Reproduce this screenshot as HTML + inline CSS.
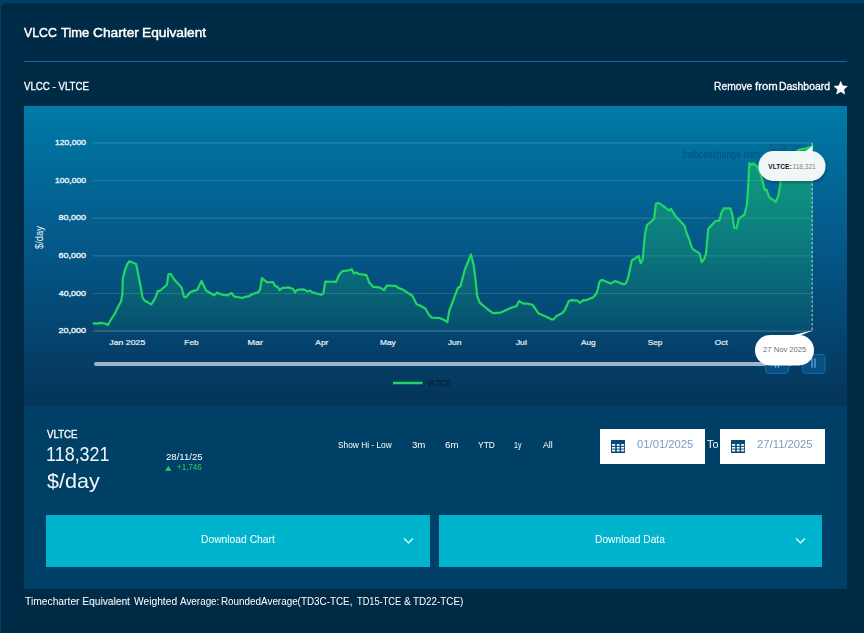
<!DOCTYPE html>
<html lang="en"><head><meta charset="utf-8"><title>VLCC Time Charter Equivalent</title>
<style>
html,body{margin:0;padding:0}
body{width:864px;height:633px;overflow:hidden;background:#003f66;position:relative;font-family:"Liberation Sans",Arial,sans-serif;color:#fff}
.card{position:absolute;left:1px;top:3px;width:870px;height:640px;background:#002b47;border-radius:5px 0 0 0}
.t{position:absolute;white-space:nowrap;line-height:1;transform-origin:0 0}
.rule{position:absolute;left:24px;top:61px;width:823px;height:1px;background:#0a6c99}
.chart{position:absolute;left:24px;top:106px;width:823px;height:300px;background:linear-gradient(#007aa6 0%,#04598a 45%,#05345a 100%)}
svg.c{position:absolute;left:0;top:0;width:864px;height:633px;overflow:visible}
svg.c text{font-family:"Liberation Sans",Arial,sans-serif}
.panel{position:absolute;left:24px;top:406px;width:823px;height:183px;background:#003f66}
.btn{position:absolute;top:515px;height:52px;background:#00b4cd}
.inp{position:absolute;top:429px;height:35px;width:105px;background:#fff}
.ico{position:absolute}
</style></head><body>
<div class="card"></div>
<div class="rule"></div>
<div class="chart"></div>
<div class="panel"></div>

<svg class="c" viewBox="0 0 864 633">
<defs>
<linearGradient id="ag" x1="0" y1="146" x2="0" y2="331" gradientUnits="userSpaceOnUse">
<stop offset="0" stop-color="#1fd15f" stop-opacity="0.50"/>
<stop offset="1" stop-color="#1fd15f" stop-opacity="0.07"/>
</linearGradient>
<filter id="sh" x="-20%" y="-30%" width="140%" height="170%"><feDropShadow dx="1" dy="1.5" stdDeviation="1.5" flood-color="#000" flood-opacity="0.35"/></filter>
</defs>
<line x1="93" x2="812.500" y1="142.9" y2="142.9" stroke="#ffffff" stroke-opacity="0.14" stroke-width="1.2"/><line x1="93" x2="812.500" y1="180.5" y2="180.5" stroke="#ffffff" stroke-opacity="0.14" stroke-width="1.2"/><line x1="93" x2="812.500" y1="218.1" y2="218.1" stroke="#ffffff" stroke-opacity="0.14" stroke-width="1.2"/><line x1="93" x2="812.500" y1="255.9" y2="255.9" stroke="#ffffff" stroke-opacity="0.14" stroke-width="1.2"/><line x1="93" x2="812.500" y1="293.5" y2="293.5" stroke="#ffffff" stroke-opacity="0.14" stroke-width="1.2"/><line x1="93" x2="812.500" y1="331.1" y2="331.1" stroke="#ffffff" stroke-opacity="0.22" stroke-width="1.2"/>
<path fill="#fff" stroke="#fff" stroke-width="0.4" stroke-linejoin="round" d="M840.70,81.30 L842.64,85.73 L847.45,86.21 L843.84,89.42 L844.87,94.14 L840.70,91.70 L836.53,94.14 L837.56,89.42 L833.95,86.21 L838.76,85.73Z"/>
<g opacity="0.68"><text x="682.81" y="157.7" font-size="10.6" fill="#03406a" textLength="77.21" lengthAdjust="spacingAndGlyphs">balticexchange.com</text></g>
<rect x="769" y="144.200" width="37" height="9" fill="#03406a" fill-opacity="0.22"/>
<path d="M771.500 147.300q2.500-1.500 4.500-.6t4 -.4M786.800 148.300l1.300-3.300 3.600 3.300z" fill="none" stroke="#2a86b0" stroke-opacity="0.45" stroke-width="0.900"/>
<path d="M93.8,323.4 L97.1,323.7 L99.5,322.9 L105.0,323.5 L107.8,325.0 L111.3,319.0 L114.5,314.2 L118.4,306.3 L121.1,301.3 L122.4,293.7 L122.8,278.7 L125.0,270.0 L127.4,263.7 L129.5,261.2 L132.6,262.6 L136.1,264.0 L137.4,270.0 L140.2,284.2 L142.6,297.6 L144.5,300.5 L151.3,304.4 L155.5,297.6 L157.9,290.8 L160.0,290.8 L166.9,284.7 L168.5,274.0 L170.8,274.0 L174.8,280.3 L181.6,287.4 L184.0,296.8 L186.0,297.2 L190.3,292.1 L197.4,289.6 L201.5,281.0 L206.0,290.5 L214.2,295.3 L217.0,292.4 L221.3,294.5 L227.6,295.3 L231.6,292.9 L234.0,296.4 L242.6,298.0 L245.0,296.8 L248.2,296.4 L252.9,294.0 L258.4,292.1 L260.0,289.7 L261.9,278.2 L267.1,282.3 L273.0,282.0 L275.0,285.8 L277.7,287.1 L279.7,290.2 L282.1,288.2 L288.4,287.4 L293.2,289.0 L295.0,292.4 L297.1,289.9 L303.4,289.3 L307.8,291.6 L310.0,290.5 L312.4,292.4 L321.1,294.8 L323.4,293.4 L325.3,281.5 L336.1,281.8 L339.2,274.7 L342.4,271.1 L348.7,270.3 L351.8,269.2 L353.9,273.6 L356.1,272.4 L358.9,274.0 L366.5,275.1 L369.2,282.6 L373.2,286.9 L379.5,287.4 L384.2,290.2 L386.6,285.5 L395.3,285.8 L399.2,288.2 L402.4,289.4 L412.3,295.7 L416.6,304.3 L420.0,305.5 L425.5,308.7 L428.7,314.5 L431.8,317.7 L439.7,318.0 L443.7,319.7 L447.3,322.1 L449.2,311.0 L453.9,298.4 L457.9,287.8 L460.3,286.6 L465.0,269.2 L471.0,254.4 L473.7,265.3 L475.3,277.9 L477.2,296.0 L479.7,302.7 L487.9,309.5 L493.0,313.1 L500.8,312.6 L510.0,308.2 L516.6,306.0 L519.0,301.1 L523.4,303.6 L527.4,303.6 L532.4,304.7 L538.7,313.6 L545.8,316.6 L551.3,319.3 L553.7,319.4 L556.1,316.3 L562.4,313.0 L564.7,310.3 L569.0,300.8 L571.8,300.2 L577.4,300.5 L579.7,302.8 L583.7,300.0 L586.1,300.3 L593.2,297.2 L596.3,293.7 L597.9,289.0 L599.5,281.8 L601.8,279.8 L610.5,283.4 L615.3,281.1 L623.2,284.1 L625.5,283.9 L627.9,278.7 L631.8,260.5 L638.7,255.8 L640.7,263.2 L642.6,260.0 L645.0,233.7 L647.0,225.0 L654.0,219.0 L656.0,203.7 L658.4,202.9 L663.9,206.4 L669.0,210.5 L671.0,208.9 L675.0,215.5 L684.5,225.8 L686.8,233.7 L689.2,239.2 L691.3,246.3 L693.2,249.5 L699.5,253.4 L701.8,262.1 L704.2,258.9 L706.1,253.4 L708.2,228.9 L715.3,221.0 L719.2,220.7 L721.6,212.4 L723.9,208.4 L730.3,208.4 L732.3,214.7 L734.2,227.8 L736.6,228.2 L738.6,218.7 L744.5,214.5 L747.0,204.2 L748.2,185.3 L749.3,163.2 L752.1,164.7 L753.7,163.5 L757.6,167.1 L760.0,172.6 L762.4,180.5 L764.7,190.0 L766.6,189.7 L769.2,197.1 L775.8,201.8 L778.2,196.3 L780.2,185.3 L780.8,177.4 L783.0,168.0 L786.0,164.0 L790.0,160.0 L793.0,156.0 L797.9,150.5 L799.5,149.7 L807.4,148.2 L812.3,146.2 L812.8,146.2 L812.8,331 L93.8,331 Z" fill="url(#ag)"/>
<path d="M93.8,323.4 L97.1,323.7 L99.5,322.9 L105.0,323.5 L107.8,325.0 L111.3,319.0 L114.5,314.2 L118.4,306.3 L121.1,301.3 L122.4,293.7 L122.8,278.7 L125.0,270.0 L127.4,263.7 L129.5,261.2 L132.6,262.6 L136.1,264.0 L137.4,270.0 L140.2,284.2 L142.6,297.6 L144.5,300.5 L151.3,304.4 L155.5,297.6 L157.9,290.8 L160.0,290.8 L166.9,284.7 L168.5,274.0 L170.8,274.0 L174.8,280.3 L181.6,287.4 L184.0,296.8 L186.0,297.2 L190.3,292.1 L197.4,289.6 L201.5,281.0 L206.0,290.5 L214.2,295.3 L217.0,292.4 L221.3,294.5 L227.6,295.3 L231.6,292.9 L234.0,296.4 L242.6,298.0 L245.0,296.8 L248.2,296.4 L252.9,294.0 L258.4,292.1 L260.0,289.7 L261.9,278.2 L267.1,282.3 L273.0,282.0 L275.0,285.8 L277.7,287.1 L279.7,290.2 L282.1,288.2 L288.4,287.4 L293.2,289.0 L295.0,292.4 L297.1,289.9 L303.4,289.3 L307.8,291.6 L310.0,290.5 L312.4,292.4 L321.1,294.8 L323.4,293.4 L325.3,281.5 L336.1,281.8 L339.2,274.7 L342.4,271.1 L348.7,270.3 L351.8,269.2 L353.9,273.6 L356.1,272.4 L358.9,274.0 L366.5,275.1 L369.2,282.6 L373.2,286.9 L379.5,287.4 L384.2,290.2 L386.6,285.5 L395.3,285.8 L399.2,288.2 L402.4,289.4 L412.3,295.7 L416.6,304.3 L420.0,305.5 L425.5,308.7 L428.7,314.5 L431.8,317.7 L439.7,318.0 L443.7,319.7 L447.3,322.1 L449.2,311.0 L453.9,298.4 L457.9,287.8 L460.3,286.6 L465.0,269.2 L471.0,254.4 L473.7,265.3 L475.3,277.9 L477.2,296.0 L479.7,302.7 L487.9,309.5 L493.0,313.1 L500.8,312.6 L510.0,308.2 L516.6,306.0 L519.0,301.1 L523.4,303.6 L527.4,303.6 L532.4,304.7 L538.7,313.6 L545.8,316.6 L551.3,319.3 L553.7,319.4 L556.1,316.3 L562.4,313.0 L564.7,310.3 L569.0,300.8 L571.8,300.2 L577.4,300.5 L579.7,302.8 L583.7,300.0 L586.1,300.3 L593.2,297.2 L596.3,293.7 L597.9,289.0 L599.5,281.8 L601.8,279.8 L610.5,283.4 L615.3,281.1 L623.2,284.1 L625.5,283.9 L627.9,278.7 L631.8,260.5 L638.7,255.8 L640.7,263.2 L642.6,260.0 L645.0,233.7 L647.0,225.0 L654.0,219.0 L656.0,203.7 L658.4,202.9 L663.9,206.4 L669.0,210.5 L671.0,208.9 L675.0,215.5 L684.5,225.8 L686.8,233.7 L689.2,239.2 L691.3,246.3 L693.2,249.5 L699.5,253.4 L701.8,262.1 L704.2,258.9 L706.1,253.4 L708.2,228.9 L715.3,221.0 L719.2,220.7 L721.6,212.4 L723.9,208.4 L730.3,208.4 L732.3,214.7 L734.2,227.8 L736.6,228.2 L738.6,218.7 L744.5,214.5 L747.0,204.2 L748.2,185.3 L749.3,163.2 L752.1,164.7 L753.7,163.5 L757.6,167.1 L760.0,172.6 L762.4,180.5 L764.7,190.0 L766.6,189.7 L769.2,197.1 L775.8,201.8 L778.2,196.3 L780.2,185.3 L780.8,177.4 L783.0,168.0 L786.0,164.0 L790.0,160.0 L793.0,156.0 L797.9,150.5 L799.5,149.7 L807.4,148.2 L812.3,146.2" fill="none" stroke="#22d662" stroke-width="2.2" stroke-linejoin="round" stroke-linecap="round"/>
<line x1="812.200" x2="812.200" y1="143" y2="331" stroke="#fff" stroke-opacity="0.55" stroke-width="1.400" stroke-dasharray="2.25,2.25"/>
<text x="55.10" y="145.0" font-size="7.1" fill="#e4f0f6" stroke="#e4f0f6" stroke-width="0.35" textLength="30.80" lengthAdjust="spacingAndGlyphs">120,000</text><text x="55.10" y="182.6" font-size="7.1" fill="#e4f0f6" stroke="#e4f0f6" stroke-width="0.35" textLength="30.80" lengthAdjust="spacingAndGlyphs">100,000</text><text x="58.52" y="220.2" font-size="7.1" fill="#e4f0f6" stroke="#e4f0f6" stroke-width="0.35" textLength="27.39" lengthAdjust="spacingAndGlyphs">80,000</text><text x="58.52" y="258.0" font-size="7.1" fill="#e4f0f6" stroke="#e4f0f6" stroke-width="0.35" textLength="27.39" lengthAdjust="spacingAndGlyphs">60,000</text><text x="58.78" y="295.6" font-size="7.1" fill="#e4f0f6" stroke="#e4f0f6" stroke-width="0.35" textLength="27.14" lengthAdjust="spacingAndGlyphs">40,000</text><text x="58.52" y="333.20000000000005" font-size="7.1" fill="#e4f0f6" stroke="#e4f0f6" stroke-width="0.35" textLength="27.39" lengthAdjust="spacingAndGlyphs">20,000</text><text x="109.29" y="345.3" font-size="8" fill="#e4f0f6" stroke="#e4f0f6" stroke-width="0.22" textLength="35.98" lengthAdjust="spacingAndGlyphs">Jan 2025</text><text x="184.38" y="345.3" font-size="8" fill="#e4f0f6" stroke="#e4f0f6" stroke-width="0.22" textLength="14.17" lengthAdjust="spacingAndGlyphs">Feb</text><text x="247.63" y="345.3" font-size="8" fill="#e4f0f6" stroke="#e4f0f6" stroke-width="0.22" textLength="15.44" lengthAdjust="spacingAndGlyphs">Mar</text><text x="315.30" y="345.3" font-size="8" fill="#e4f0f6" stroke="#e4f0f6" stroke-width="0.22" textLength="13.07" lengthAdjust="spacingAndGlyphs">Apr</text><text x="379.97" y="345.3" font-size="8" fill="#e4f0f6" stroke="#e4f0f6" stroke-width="0.22" textLength="15.83" lengthAdjust="spacingAndGlyphs">May</text><text x="447.89" y="345.3" font-size="8" fill="#e4f0f6" stroke="#e4f0f6" stroke-width="0.22" textLength="13.68" lengthAdjust="spacingAndGlyphs">Jun</text><text x="515.69" y="345.3" font-size="8" fill="#e4f0f6" stroke="#e4f0f6" stroke-width="0.22" textLength="11.23" lengthAdjust="spacingAndGlyphs">Jul</text><text x="581.00" y="345.3" font-size="8" fill="#e4f0f6" stroke="#e4f0f6" stroke-width="0.22" textLength="14.66" lengthAdjust="spacingAndGlyphs">Aug</text><text x="647.69" y="345.3" font-size="8" fill="#e4f0f6" stroke="#e4f0f6" stroke-width="0.22" textLength="14.56" lengthAdjust="spacingAndGlyphs">Sep</text><text x="714.89" y="345.3" font-size="8" fill="#e4f0f6" stroke="#e4f0f6" stroke-width="0.22" textLength="12.94" lengthAdjust="spacingAndGlyphs">Oct</text>
<text transform="translate(43.200,249) rotate(-90)" font-size="10" fill="#eef5f9" textLength="23" lengthAdjust="spacingAndGlyphs">$/day</text>
<line x1="96" x2="790" y1="364" y2="364" stroke="#9db5c8" stroke-width="4" stroke-linecap="round"/>
<rect x="765.500" y="354.500" width="23" height="19" rx="3.500" fill="#075085" stroke="#136c9f"/>
<rect x="802.500" y="354.500" width="22.500" height="19" rx="3.500" fill="#075085" stroke="#136c9f"/>
<path d="M775.600 358.600v9.200M778.600 358.600v9.200M812 358.600v9.200M815 358.600v9.200" stroke="#62a9cf" stroke-width="1.300"/>
<line x1="393" x2="422.500" y1="383" y2="383" stroke="#22d662" stroke-width="2.500"/>
<text x="427.00" y="385.8" font-size="9.3" fill="#04182f" textLength="24.25" lengthAdjust="spacingAndGlyphs">VLTCE</text>
<g filter="url(#sh)"><rect x="758.500" y="151" width="67" height="30" rx="15" fill="#fff" fill-opacity="0.93"/></g>
<path d="M812.600 146 L804.500 152 L812.400 152Z" fill="#fff"/>
<text x="768.20" y="169" font-size="7.2" fill="#15152a" font-weight="bold" textLength="23.55" lengthAdjust="spacingAndGlyphs">VLTCE:</text><text x="792.55" y="169" font-size="7.2" fill="#808080" textLength="23.13" lengthAdjust="spacingAndGlyphs">118,321</text>
<path d="M813.200 330.300 L792 335.300 L799 336Z" fill="#fff"/>
<rect x="755" y="335" width="59" height="30.500" rx="15" fill="#fff"/>
<text x="763.08" y="352" font-size="7.2" fill="#707078" textLength="43.23" lengthAdjust="spacingAndGlyphs">27 Nov 2025</text>
</svg>

<svg class="ico" style="left:165px;top:465.800px" width="7" height="5" viewBox="0 0 7 5"><path d="M3.300 0L6.500 4.800H0z" fill="#2ecf62"/></svg>
<div class="inp" style="left:600px"></div>
<div class="inp" style="left:720px"></div>
<svg class="ico" style="left:611px;top:439.700px" width="14" height="13" viewBox="0 0 14 13"><rect width="14" height="13" fill="#064a7a"/><g fill="#fff"><rect x="1" y="4.100" width="3.200" height="1.700"/><rect x="5.800" y="4.100" width="2.800" height="1.700"/><rect x="10.100" y="4.100" width="3.100" height="1.700"/><rect x="1" y="6.900" width="3.200" height="1.700"/><rect x="5.800" y="6.900" width="2.800" height="1.700"/><rect x="10.100" y="6.900" width="3.100" height="1.700"/><rect x="1" y="9.600" width="3.200" height="1.800"/><rect x="5.800" y="9.600" width="2.800" height="1.800"/><rect x="10.100" y="9.600" width="3.100" height="1.800"/></g></svg>
<svg class="ico" style="left:731px;top:439.700px" width="14" height="13" viewBox="0 0 14 13"><rect width="14" height="13" fill="#064a7a"/><g fill="#fff"><rect x="1" y="4.100" width="3.200" height="1.700"/><rect x="5.800" y="4.100" width="2.800" height="1.700"/><rect x="10.100" y="4.100" width="3.100" height="1.700"/><rect x="1" y="6.900" width="3.200" height="1.700"/><rect x="5.800" y="6.900" width="2.800" height="1.700"/><rect x="10.100" y="6.900" width="3.100" height="1.700"/><rect x="1" y="9.600" width="3.200" height="1.800"/><rect x="5.800" y="9.600" width="2.800" height="1.800"/><rect x="10.100" y="9.600" width="3.100" height="1.800"/></g></svg>
<div class="btn" style="left:46px;width:384px"></div>
<div class="btn" style="left:439px;width:383px"></div>
<svg class="ico" style="left:403px;top:537.400px" width="11" height="8" viewBox="0 0 11 8"><path d="M1.200 1.500l4.300 4.500 4.300-4.500" fill="none" stroke="#fff" stroke-width="1.100"/></svg>
<svg class="ico" style="left:795px;top:537.400px" width="11" height="8" viewBox="0 0 11 8"><path d="M1.200 1.500l4.300 4.500 4.300-4.500" fill="none" stroke="#fff" stroke-width="1.100"/></svg>
<div class="t" id="ti1" style="left:24.20px;top:26.40px;font-size:13px;color:#ffffff;-webkit-text-stroke:0.45px #ffffff;transform:scaleX(0.9477)">VLCC</div>
<div class="t" id="ti2" style="left:61.10px;top:26.40px;font-size:13px;color:#ffffff;-webkit-text-stroke:0.45px #ffffff;transform:scaleX(0.9918)">Time</div>
<div class="t" id="ti3" style="left:92.77px;top:26.40px;font-size:13px;color:#ffffff;-webkit-text-stroke:0.45px #ffffff;transform:scaleX(1.0582)">Charter</div>
<div class="t" id="ti4" style="left:142.14px;top:26.40px;font-size:13px;color:#ffffff;-webkit-text-stroke:0.45px #ffffff;transform:scaleX(1.0570)">Equivalent</div>
<div class="t" id="sub" style="left:24.20px;top:80.59px;font-size:11px;color:#ffffff;-webkit-text-stroke:0.3px #ffffff;transform:scaleX(0.8811)">VLCC - VLTCE</div>
<div class="t" id="rm1" style="left:713.56px;top:81.19px;font-size:11px;color:#ffffff;-webkit-text-stroke:0.3px #ffffff;transform:scaleX(0.9359)">Remove</div>
<div class="t" id="rm2" style="left:754.90px;top:81.19px;font-size:11px;color:#ffffff;-webkit-text-stroke:0.3px #ffffff;transform:scaleX(1.0312)">from</div>
<div class="t" id="rm3" style="left:779.15px;top:81.19px;font-size:11px;color:#ffffff;-webkit-text-stroke:0.3px #ffffff;transform:scaleX(0.9485)">Dashboard</div>
<div class="t" id="k1" style="left:46.90px;top:429.57px;font-size:10.2px;color:#ffffff;-webkit-text-stroke:0.3px #ffffff;transform:scaleX(0.9522)">VLTCE</div>
<div class="t" id="k2" style="left:45.94px;top:445.34px;font-size:19.8px;color:#f2f7fa;transform:scaleX(0.9078)">118,321</div>
<div class="t" id="k3" style="left:47.08px;top:472.34px;font-size:19.8px;color:#f2f7fa;transform:scaleX(1.0884)">$/day</div>
<div class="t" id="k4" style="left:165.59px;top:452.83px;font-size:9.3px;color:#ffffff;transform:scaleX(1.0334)">28/11/25</div>
<div class="t" id="k5" style="left:176.51px;top:464.16px;font-size:8.2px;color:#2ecf62;transform:scaleX(0.9817)">+1,746</div>
<div class="t" id="r0" style="left:337.85px;top:439.87px;font-size:9.6px;color:#ffffff;transform:scaleX(0.8691)">Show Hi - Low</div>
<div class="t" id="r1" style="left:412.20px;top:439.87px;font-size:9.6px;color:#ffffff;transform:scaleX(1.0049)">3m</div>
<div class="t" id="r2" style="left:444.89px;top:439.87px;font-size:9.6px;color:#ffffff;transform:scaleX(1.0130)">6m</div>
<div class="t" id="r3" style="left:477.82px;top:439.87px;font-size:9.6px;color:#ffffff;transform:scaleX(0.8833)">YTD</div>
<div class="t" id="r4" style="left:514.18px;top:439.87px;font-size:9.6px;color:#ffffff;transform:scaleX(0.7416)">1y</div>
<div class="t" id="r5" style="left:543.00px;top:439.87px;font-size:9.6px;color:#ffffff;transform:scaleX(0.9167)">All</div>
<div class="t" id="to" style="left:706.78px;top:440.14px;font-size:10px;color:#ffffff;transform:scaleX(1.0800)">To</div>
<div class="t" id="d1" style="left:637.39px;top:438.69px;font-size:11px;color:#7b9bbd;transform:scaleX(1.0233)">01/01/2025</div>
<div class="t" id="d2" style="left:756.99px;top:438.69px;font-size:11px;color:#7b9bbd;transform:scaleX(1.0259)">27/11/2025</div>
<div class="t" id="b1" style="left:200.89px;top:534.07px;font-size:11.5px;color:#ffffff;transform:scaleX(0.8950)">Download Chart</div>
<div class="t" id="b2" style="left:595.20px;top:534.07px;font-size:11.5px;color:#ffffff;transform:scaleX(0.8889)">Download Data</div>
<div class="t" id="f1" style="left:24.60px;top:597.37px;font-size:10.2px;color:#ffffff;transform:scaleX(1.0105)">Timecharter</div>
<div class="t" id="f2" style="left:82.30px;top:597.37px;font-size:10.2px;color:#ffffff;transform:scaleX(1.0000)">Equivalent</div>
<div class="t" id="f3" style="left:133.90px;top:597.37px;font-size:10.2px;color:#ffffff;transform:scaleX(1.0063)">Weighted</div>
<div class="t" id="f4" style="left:179.70px;top:597.37px;font-size:10.2px;color:#ffffff;transform:scaleX(0.9697)">Average:</div>
<div class="t" id="f5" style="left:221.43px;top:597.37px;font-size:10.2px;color:#ffffff;transform:scaleX(0.9684)">RoundedAverage(TD3C-TCE,</div>
<div class="t" id="f6" style="left:356.52px;top:597.37px;font-size:10.2px;color:#ffffff;transform:scaleX(0.9079)">TD15-TCE</div>
<div class="t" id="f7" style="left:403.60px;top:597.37px;font-size:10.2px;color:#ffffff;transform:scaleX(1.0156)">&amp;</div>
<div class="t" id="f8" style="left:413.11px;top:597.37px;font-size:10.2px;color:#ffffff;transform:scaleX(0.9661)">TD22-TCE)</div>
</body></html>
